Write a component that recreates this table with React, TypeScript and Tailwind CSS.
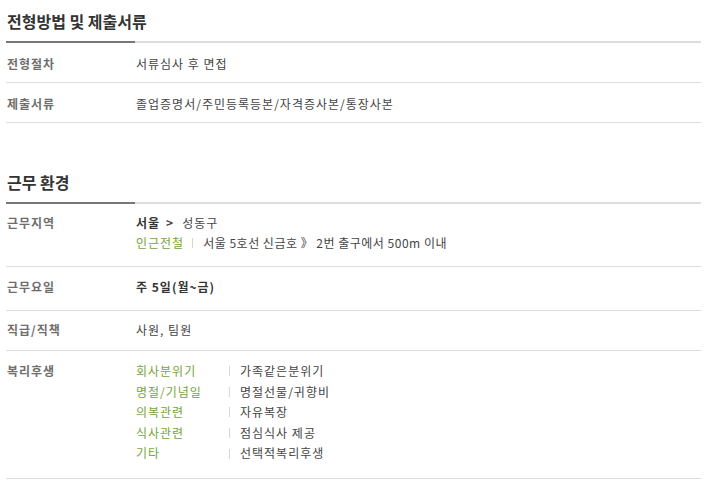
const FONT = "font-['Noto_Sans_CJK_KR','Noto_Sans',sans-serif]";

function SectionTitle({ title }: { title: string }) {
  return (
    <div>
      <h2 className="pt-[11px] pb-[10px] pl-[1px] text-[16px] leading-[20px] font-bold text-[#333]">
        {title}
      </h2>
      <div className="flex h-[2px]">
        <div className="w-[129px] bg-[#777]" />
        <div className="flex-1 bg-[#ddd]" />
      </div>
    </div>
  );
}

function Row({
  label,
  className,
  children,
}: {
  label: string;
  className: string;
  children: React.ReactNode;
}) {
  return (
    <div className={`flex border-b border-[#ddd] tracking-[1px] ${className}`}>
      <div className="w-[130px] shrink-0 pl-[1px] font-bold text-[#6e6e6e]">{label}</div>
      <div className="flex-1 text-[#444]">{children}</div>
    </div>
  );
}

function Bar() {
  return <span className="inline-block w-px h-[10px] bg-[#d6d6d6]" />;
}

const benefits = [
  ["회사분위기", "가족같은분위기"],
  ["명절/기념일", "명절선물/귀향비"],
  ["의복관련", "자유복장"],
  ["식사관련", "점심식사 제공"],
  ["기타", "선택적복리후생"],
];

export default function App() {
  return (
    <main className={`${FONT} bg-white w-[710px] h-[486px] text-[12px]`}>
      <div className="ml-[6px] w-[695px]">
        <SectionTitle title="전형방법 및 제출서류" />
        <Row label="전형절차" className="pt-[11px] pb-[8px] leading-[20px]">
          서류심사 후 면접
        </Row>
        <Row label="제출서류" className="pt-[11px] pb-[8px] leading-[20px]">
          졸업증명서/주민등록등본/자격증사본/통장사본
        </Row>

        <div className="mt-[38px]">
          <SectionTitle title="근무 환경" />
        </div>
        <Row label="근무지역" className="pt-[9px] pb-[13px] leading-[20px]">
          <div>
            <b className="text-[#333]">서울</b>
            <b className="ml-[6px] mr-[8px] text-[#444]">&gt;</b>
            <span>성동구</span>
          </div>
          <div className="flex items-center">
            <span className="text-[#74a536]">인근전철</span>
            <span className="ml-[8px] mr-[10px] flex items-center"><Bar /></span>
            <span className="tracking-[0.5px]">서울 5호선 신금호 》 2번 출구에서 500m 이내</span>
          </div>
        </Row>
        <Row label="근무요일" className="pt-[10px] pb-[13px] leading-[20px]">
          <b className="text-[#333]">주 5일(월~금)</b>
        </Row>
        <Row label="직급/직책" className="pt-[9px] pb-[10px] leading-[20px]">
          사원, 팀원
        </Row>
        <Row label="복리후생" className="pt-[10px] pb-[14px] leading-[20.6px]">
          {benefits.map(([k, v]) => (
            <div key={k} className="flex items-center">
              <span className="w-[93px] text-[#74a536]">{k}</span>
              <Bar />
              <span className="ml-[10px]">{v}</span>
            </div>
          ))}
        </Row>
      </div>
    </main>
  );
}
